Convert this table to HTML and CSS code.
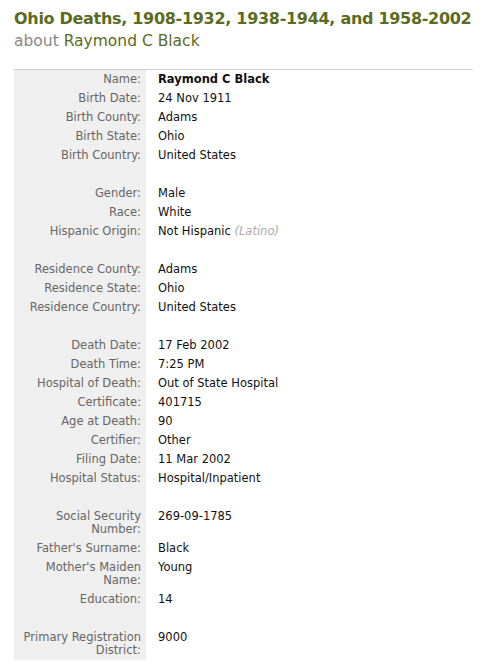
FILE: index.html
```html
<!DOCTYPE html>
<html>
<head>
<meta charset="utf-8">
<link rel="stylesheet" href="styles.css">
</head>
<body>
<div class="page">
  <h1 class="title">Ohio Deaths, 1908-1932, 1938-1944, and 1958-2002</h1>
  <h2 class="subtitle"><span class="about">about</span> Raymond C Black</h2>
  <div class="record">
    <div class="label">Name:</div><div class="value strong">Raymond C Black</div>
    <div class="label">Birth Date:</div><div class="value">24 Nov 1911</div>
    <div class="label">Birth County:</div><div class="value">Adams</div>
    <div class="label">Birth State:</div><div class="value">Ohio</div>
    <div class="label">Birth Country:</div><div class="value">United States</div>
    <div class="label spacer"></div><div class="value spacer"></div>
    <div class="label">Gender:</div><div class="value">Male</div>
    <div class="label">Race:</div><div class="value">White</div>
    <div class="label">Hispanic Origin:</div><div class="value">Not Hispanic <em class="note">(Latino)</em></div>
    <div class="label spacer"></div><div class="value spacer"></div>
    <div class="label">Residence County:</div><div class="value">Adams</div>
    <div class="label">Residence State:</div><div class="value">Ohio</div>
    <div class="label">Residence Country:</div><div class="value">United States</div>
    <div class="label spacer"></div><div class="value spacer"></div>
    <div class="label">Death Date:</div><div class="value">17 Feb 2002</div>
    <div class="label">Death Time:</div><div class="value">7:25 PM</div>
    <div class="label">Hospital of Death:</div><div class="value">Out of State Hospital</div>
    <div class="label">Certificate:</div><div class="value">401715</div>
    <div class="label">Age at Death:</div><div class="value">90</div>
    <div class="label">Certifier:</div><div class="value">Other</div>
    <div class="label">Filing Date:</div><div class="value">11 Mar 2002</div>
    <div class="label">Hospital Status:</div><div class="value">Hospital/Inpatient</div>
    <div class="label spacer"></div><div class="value spacer"></div>
    <div class="label">Social Security Number:</div><div class="value">269-09-1785</div>
    <div class="label">Father's Surname:</div><div class="value">Black</div>
    <div class="label">Mother's Maiden Name:</div><div class="value">Young</div>
    <div class="label">Education:</div><div class="value">14</div>
    <div class="label spacer"></div><div class="value spacer"></div>
    <div class="label">Primary Registration District:</div><div class="value">9000</div>
  </div>
</div>
</body>
</html>
```
FILE: styles.css
```css
html, body {
  margin: 0;
  padding: 0;
  background: #fff;
}
.page {
  padding: 8px 20px 0 14px;
  font-family: "DejaVu Sans", Verdana, sans-serif;
}
.title {
  margin: 0;
  font-size: 16px;
  line-height: 22px;
  font-weight: bold;
  letter-spacing: -0.3px;
  white-space: nowrap;
  color: #5b6b1f;
}
.subtitle {
  margin: 0 0 17px 0;
  font-size: 15.5px;
  line-height: 22px;
  font-weight: normal;
  color: #5b6b1f;
}
.about {
  color: #888;
}
.record {
  display: grid;
  grid-template-columns: 132px 1fr;
  border-top: 1px solid #ccc;
  font-size: 11.5px;
  line-height: 13px;
}
.label {
  background: #efefef;
  color: #666;
  text-align: right;
  padding: 3px 5px 3px 2px;
}
.value {
  color: #111;
  padding: 3px 0 3px 12px;
}
.spacer {
  height: 13px;
}
.strong {
  font-weight: bold;
}
.note {
  color: #aaa;
}
```
